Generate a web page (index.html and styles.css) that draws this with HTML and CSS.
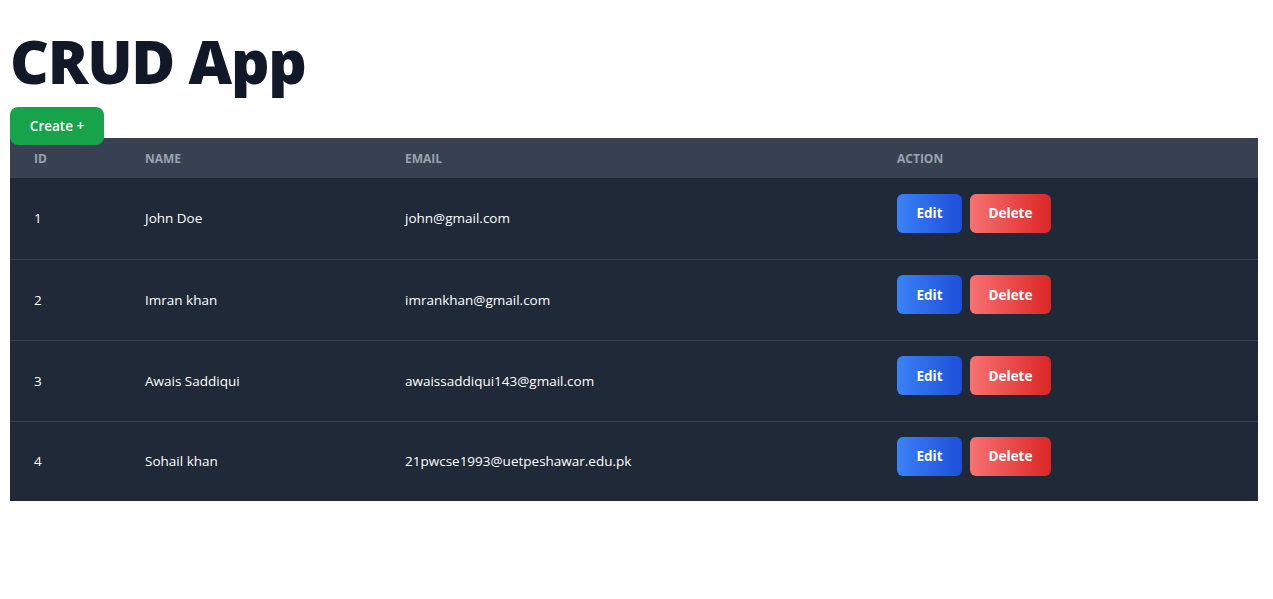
FILE: index.html
```html
<!DOCTYPE html>
<html>
<head>
<meta charset="utf-8">
<link rel="stylesheet" href="styles.css">
</head>
<body>
<div class="page">
  <h1 class="title">CRUD App</h1>
  <button class="btn-create">Create +</button>
  <table class="grid">
    <thead>
      <tr>
        <th class="c-id">ID</th>
        <th class="c-name">Name</th>
        <th class="c-email">Email</th>
        <th class="c-action">Action</th>
      </tr>
    </thead>
    <tbody>
      <tr>
        <td>1</td><td>John Doe</td><td>john@gmail.com</td>
        <td><div class="actions"><button class="btn btn-edit">Edit</button><button class="btn btn-delete">Delete</button></div></td>
      </tr>
      <tr>
        <td>2</td><td>Imran khan</td><td>imrankhan@gmail.com</td>
        <td><div class="actions"><button class="btn btn-edit">Edit</button><button class="btn btn-delete">Delete</button></div></td>
      </tr>
      <tr>
        <td>3</td><td>Awais Saddiqui</td><td>awaissaddiqui143@gmail.com</td>
        <td><div class="actions"><button class="btn btn-edit">Edit</button><button class="btn btn-delete">Delete</button></div></td>
      </tr>
      <tr>
        <td>4</td><td>Sohail khan</td><td>21pwcse1993@uetpeshawar.edu.pk</td>
        <td><div class="actions"><button class="btn btn-edit">Edit</button><button class="btn btn-delete">Delete</button></div></td>
      </tr>
    </tbody>
  </table>
</div>
</body>
</html>
```

FILE: styles.css
```css
* { box-sizing: border-box; }
html, body { margin: 0; padding: 0; background: #ffffff; }
body { font-family: "Open Sans", "Noto Sans", sans-serif; color: #111827; }
.page { padding: 10px 15px 10px 10px; }
.title {
  margin: 18px 0 13px 0;
  font-size: 60px;
  line-height: 66px;
  font-weight: 800;
  color: #111827;
  letter-spacing: -1.2px;
}
.btn-create {
  display: block;
  position: relative;
  z-index: 1;
  width: 94px;
  height: 38px;
  margin: 0 0 -7px 0;
  border: 0;
  border-radius: 8px;
  background: #16a34a;
  color: #ffffff;
  font-family: inherit;
  font-size: 13.5px;
  font-weight: 600;
  cursor: pointer;
}
.grid {
  width: 1248px;
  border-collapse: collapse;
  table-layout: fixed;
  background: #1f2937;
}
.grid th {
  height: 40px;
  background: #374151;
  color: #9ca3af;
  font-size: 12px;
  font-weight: 700;
  text-transform: uppercase;
  text-align: left;
  padding: 0 24px;
}
.c-id { width: 111px; }
.c-name { width: 260px; }
.c-email { width: 492px; }
.grid td {
  height: 81px;
  padding: 0 24px;
  color: #ffffff;
  font-size: 13.5px;
  border-bottom: 1px solid #374151;
}
.grid tbody tr:last-child td { border-bottom: 0; height: 80px; }
.actions { display: flex; gap: 8px; }
.btn {
  height: 39px;
  border: 0;
  border-radius: 6px;
  color: #ffffff;
  font-family: inherit;
  font-size: 13.5px;
  font-weight: 700;
  cursor: pointer;
  position: relative;
  top: -5px;
}
.btn-edit { width: 65px; background: linear-gradient(to right, #3b82f6, #1d4ed8); }
.btn-delete { width: 81px; background: linear-gradient(to right, #f87171, #dc2626); }
```
